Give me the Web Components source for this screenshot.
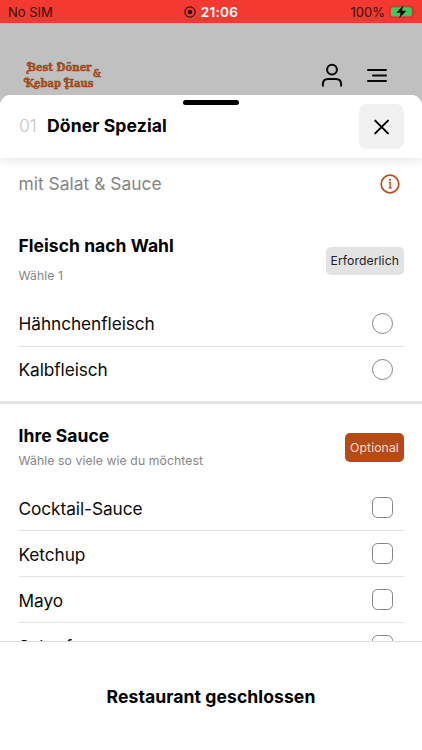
<!DOCTYPE html>
<html lang="de">
<head>
<meta charset="utf-8">
<meta name="viewport" content="width=device-width, initial-scale=1">
<title>Best Döner &amp; Kebap Haus</title>
<style>
    html, body {
        margin: 0;
        height: 100%;
        overflow: hidden;
    }

    body {
        --accent: #b64b17;
        --line: #e2e2e2;
        --muted: #858585;
        display: flex;
        flex-direction: column;
        background: #c0c0c0;
        color: #0a0a0a;
        font-family: Inter, "Liberation Sans", sans-serif;
    }
</style>
</head>
<body>
    <status-bar></status-bar>
    <shop-header></shop-header>
    <product-sheet>
        <sheet-header slot="header" number="01">Döner Spezial</sheet-header>
        <product-note>mit Salat &amp; Sauce</product-note>
        <option-group>
            <span slot="title">Fleisch nach Wahl</span>
            <span slot="hint">Wähle 1</span>
            <option-badge slot="badge">Erforderlich</option-badge>
            <option-row type="radio">Hähnchenfleisch</option-row>
            <option-row type="radio">Kalbfleisch</option-row>
        </option-group>
        <option-group compact>
            <span slot="title">Ihre Sauce</span>
            <span slot="hint">Wähle so viele wie du möchtest</span>
            <option-badge slot="badge" optional>Optional</option-badge>
            <option-row type="checkbox">Cocktail-Sauce</option-row>
            <option-row type="checkbox">Ketchup</option-row>
            <option-row type="checkbox">Mayo</option-row>
            <option-row type="checkbox">Scharf</option-row>
        </option-group>
        <sheet-footer slot="footer">Restaurant geschlossen</sheet-footer>
    </product-sheet>

<script>
class StatusBar extends HTMLElement {
    constructor() {
        super();
        this.attachShadow({mode: 'open'});
    }

    connectedCallback() {
        this.shadowRoot.innerHTML = `
            <style>
                :host {
                    display: grid;
                    grid-template-columns: 1fr auto 1fr;
                    align-items: center;
                    flex: none;
                    box-sizing: border-box;
                    height: 23px;
                    padding: 1px 6px 0 8px;
                    background: #f43a30;
                    color: #35100c;
                    font-size: 13px;
                    line-height: 22px;
                }

                .time, .power {
                    display: flex;
                    align-items: center;
                }

                .time {
                    gap: 5px;
                    margin-right: 2px;
                    color: #fff;
                    font-size: 13.6px;
                    font-weight: 600;
                    letter-spacing: .25px;
                }

                .power {
                    justify-content: flex-end;
                    gap: 4px;
                }

                svg {
                    display: block;
                }
            </style>
            <span>No SIM</span>
            <span class="time">
                <svg width="12" height="12" viewBox="0 0 12 12">
                    <circle cx="6" cy="6" r="5.1" fill="none" stroke="#35100c" stroke-width="1.2"/>
                    <circle cx="6" cy="6" r="2.3" fill="#240806"/>
                </svg>
                21:06
            </span>
            <span class="power">
                100%
                <svg width="27" height="14" viewBox="0 0 27 14">
                    <rect x=".6" y="1" width="23.4" height="11.6" rx="3" fill="none" stroke="#9b4b2c"/>
                    <rect x="2" y="2.4" width="20.6" height="8.8" rx="1.8" fill="#43c65b"/>
                    <path d="M25.2 4.8q1.6 2 0 4z" fill="#9b3a2c"/>
                    <path d="M14.3.4 7.3 7.8h4.3l-1.4 5.4 7.2-7.5h-4.4z" fill="#140805"/>
                </svg>
            </span>
        `;
    }
}

class ShopHeader extends HTMLElement {
    constructor() {
        super();
        this.attachShadow({mode: 'open'});
    }

    connectedCallback() {
        this.shadowRoot.innerHTML = `
            <style>
                :host {
                    display: flex;
                    flex: none;
                    align-items: flex-end;
                    justify-content: space-between;
                    box-sizing: border-box;
                    height: 72px;
                    padding: 0 34px 5px 23px;
                }

                svg {
                    display: block;
                }

                nav {
                    display: flex;
                    gap: 23px;
                }

                .logo text {
                    font-family: "DejaVu Serif", serif;
                    font-weight: 700;
                    fill: #ad501e;
                    stroke: #8f4118;
                    stroke-width: .45px;
                }

                .icon {
                    fill: none;
                    stroke: #080808;
                    stroke-width: 2;
                    stroke-linecap: round;
                    stroke-linejoin: round;
                }
            </style>
            <svg class="logo" width="80" height="32" viewBox="0 0 80 32">
                <g font-size="11.8">
                    <text transform="translate(4.5 12.8) scale(.8 1)" textLength="80" lengthAdjust="spacingAndGlyphs">Best Döner</text>
                    <text transform="translate(70 19.4) scale(.8 1)" font-size="10.5" textLength="9.8" lengthAdjust="spacingAndGlyphs">&amp;</text>
                    <text transform="translate(2.5 28.8) scale(.8 1)" textLength="85" lengthAdjust="spacingAndGlyphs">Kebap Haus</text>
                </g>
                <g fill="none" stroke="#a64b1c" stroke-width="1.5" stroke-linecap="round">
                    <path d="M7.5 4.6C3.4 3.6 3.6 8.4 6.4 7.8M6.8 12.6c-3.8.4-4.2 3-1.4 2.6M38 4.6c-4.4-.8-4.4 4.4-1 3.8"/>
                    <path d="M5 20.2c-5-.8-4.8 4.2-1.4 3.8M11 29c.8 2 3.2 2 4.4.4M45 20.2c-5-.8-4.8 4.2-1.4 3.8M45 28.6c-3 .2-2.8 3-.2 2"/>
                </g>
            </svg>
            <nav>
                <svg class="icon" width="22" height="30" viewBox="0 0 22 30">
                    <circle cx="11" cy="9.6" r="4.9"/>
                    <path d="M1.9 25.8v-1.5c0-3.4 2.2-5.4 5.4-5.4h7.4c3.2 0 5.4 2 5.4 5.4v1.5"/>
                </svg>
                <svg class="icon" width="22" height="30" viewBox="0 0 22 30">
                    <path d="M2 10h18M7 15.5h13M2 21.1h18"/>
                </svg>
            </nav>
        `;
    }
}

class ProductSheet extends HTMLElement {
    constructor() {
        super();
        this.attachShadow({mode: 'open'});
    }

    connectedCallback() {
        this.shadowRoot.innerHTML = `
            <style>
                :host {
                    display: flex;
                    flex-direction: column;
                    flex: 1;
                    min-height: 0;
                    border-radius: 11px 11px 0 0;
                    background: #fff;
                    overflow: hidden;
                }

                .content {
                    flex: 1;
                    min-height: 0;
                    overflow: hidden;
                }
            </style>
            <slot name="header"></slot>
            <div class="content"><slot></slot></div>
            <slot name="footer"></slot>
        `;
    }
}

class SheetHeader extends HTMLElement {
    constructor() {
        super();
        this.attachShadow({mode: 'open'});
    }

    connectedCallback() {
        this.shadowRoot.innerHTML = `
            <style>
                :host {
                    position: relative;
                    display: flex;
                    flex: none;
                    align-items: center;
                    box-sizing: border-box;
                    height: 63px;
                    padding: 0 18px 0 19px;
                    background: #fff;
                    box-shadow: 0 2px 11px rgba(0, 0, 0, .11);
                    font-size: 17.6px;
                }

                /* drag handle, lies over the top edge */
                .handle {
                    position: absolute;
                    top: 5px;
                    left: 50%;
                    width: 56px;
                    height: 5px;
                    border-radius: 3px;
                    background: #000;
                    transform: translateX(-50%);
                }

                .number {
                    width: 28px;
                    padding-bottom: 2px;
                    color: #c5c5c5;
                    font-weight: 300;
                }

                h1 {
                    flex: 1;
                    margin: 0;
                    padding-bottom: 2px;
                    font-size: inherit;
                    font-weight: 700;
                    letter-spacing: .08px;
                    color: #000;
                }

                button {
                    display: grid;
                    place-items: center;
                    width: 45px;
                    height: 45px;
                    padding: 0;
                    border: 0;
                    border-radius: 8px;
                    background: #f1f1f1;
                }
            </style>
            <div class="handle"></div>
            <span class="number">${this.getAttribute('number')}</span>
            <h1><slot></slot></h1>
            <button aria-label="Schließen">
                <svg width="17" height="17" viewBox="0 0 17 17" stroke="#000" stroke-width="2" stroke-linecap="round">
                    <path d="M2.2 2.6l12.8 12.8M15 2.6 2.2 15.4"/>
                </svg>
            </button>
        `;
    }
}

class ProductNote extends HTMLElement {
    constructor() {
        super();
        this.attachShadow({mode: 'open'});
    }

    connectedCallback() {
        this.shadowRoot.innerHTML = `
            <style>
                :host {
                    display: flex;
                    align-items: center;
                    justify-content: space-between;
                    box-sizing: border-box;
                    height: 52px;
                    padding: 0 22px 1px 18.5px;
                    color: var(--muted);
                    font-size: 17.4px;
                    letter-spacing: .02px;
                }

                svg {
                    margin-top: 1px;
                }
            </style>
            <slot></slot>
            <svg width="20" height="20" viewBox="0 0 20 20" fill="none" stroke="#b64b17">
                <circle cx="10" cy="10" r="8.8" stroke-width="1.7"/>
                <path d="M8.8 8.5h1.4v5.3M8.5 13.9h3.3" stroke-width="1.3"/>
                <circle cx="10" cy="5.8" r="1.1" fill="#b64b17" stroke="none"/>
            </svg>
        `;
    }
}

class OptionGroup extends HTMLElement {
    constructor() {
        super();
        this.attachShadow({mode: 'open'});
    }

    connectedCallback() {
        this.shadowRoot.innerHTML = `
            <style>
                :host {
                    display: block;
                    padding: 22px 0 8px;
                    border-bottom: 3px solid #e3e3e3;
                }

                :host([compact]) {
                    padding-top: 18px;
                }

                header {
                    display: flex;
                    align-items: flex-start;
                    justify-content: space-between;
                    height: 69px;
                    padding: 0 18px 0 18.5px;
                }

                h2 {
                    margin: 0;
                    color: #000;
                    font-size: 17.5px;
                    font-weight: 700;
                    line-height: 27px;
                    letter-spacing: .04px;
                }

                p {
                    margin: 8px 0 0;
                    color: var(--muted);
                    font-size: 12.2px;
                    line-height: 18px;
                    letter-spacing: .1px;
                }

                slot[name="badge"]::slotted(*) {
                    margin-top: 15px;
                }

                .rows {
                    margin: 0 18px 0 18.5px;
                }

                :host([compact]) header {
                    height: 63px;
                }

                :host([compact]) p {
                    margin-top: 3px;
                }

                :host([compact]) slot[name="badge"]::slotted(*) {
                    margin-top: 11px;
                }
            </style>
            <header>
                <div>
                    <h2><slot name="title"></slot></h2>
                    <p><slot name="hint"></slot></p>
                </div>
                <slot name="badge"></slot>
            </header>
            <div class="rows"><slot></slot></div>
        `;
    }
}

class OptionBadge extends HTMLElement {
    constructor() {
        super();
        this.attachShadow({mode: 'open'});
    }

    connectedCallback() {
        this.shadowRoot.innerHTML = `
            <style>
                :host {
                    display: block;
                    box-sizing: border-box;
                    width: 78.5px;
                    height: 28px;
                    border-radius: 5px;
                    background: #e3e3e3;
                    color: #222;
                    font-size: 12.2px;
                    line-height: 28px;
                    letter-spacing: .1px;
                    text-align: center;
                }

                :host([optional]) {
                    width: 59px;
                    height: 28.5px;
                    background: var(--accent);
                    color: #f7ddd0;
                    line-height: 29px;
                }
            </style>
            <slot></slot>
        `;
    }
}

class OptionRow extends HTMLElement {
    constructor() {
        super();
        this.attachShadow({mode: 'open'});
    }

    connectedCallback() {
        this.shadowRoot.innerHTML = `
            <style>
                :host {
                    display: flex;
                    align-items: center;
                    justify-content: space-between;
                    box-sizing: border-box;
                    height: 46px;
                    padding-right: 11px;
                    border-bottom: 1px solid var(--line);
                    font-size: 17.3px;
                    letter-spacing: -.08px;
                }

                :host(:last-child) {
                    border-bottom-color: transparent;
                }

                :host([type="checkbox"]) .label {
                    padding-top: 1px;
                }

                .mark {
                    box-sizing: border-box;
                    width: 21px;
                    height: 21px;
                    border: 1px solid #858585;
                    border-radius: 5.5px;
                }

                :host([type="radio"]) .mark {
                    border-radius: 50%;
                }
            </style>
            <span class="label"><slot></slot></span>
            <span class="mark"></span>
        `;
    }
}

class SheetFooter extends HTMLElement {
    constructor() {
        super();
        this.attachShadow({mode: 'open'});
    }

    connectedCallback() {
        this.shadowRoot.innerHTML = `
            <style>
                :host {
                    display: flex;
                    flex: none;
                    align-items: center;
                    justify-content: center;
                    box-sizing: border-box;
                    height: 109px;
                    border-top: 1px solid #dedede;
                    background: #fff;
                    color: #000;
                    font-size: 17.6px;
                    font-weight: 700;
                    letter-spacing: .06px;
                }
            </style>
            <slot></slot>
        `;
    }
}

customElements.define('status-bar', StatusBar);
customElements.define('shop-header', ShopHeader);
customElements.define('product-sheet', ProductSheet);
customElements.define('sheet-header', SheetHeader);
customElements.define('product-note', ProductNote);
customElements.define('option-group', OptionGroup);
customElements.define('option-badge', OptionBadge);
customElements.define('option-row', OptionRow);
customElements.define('sheet-footer', SheetFooter);
</script>
</body>
</html>
